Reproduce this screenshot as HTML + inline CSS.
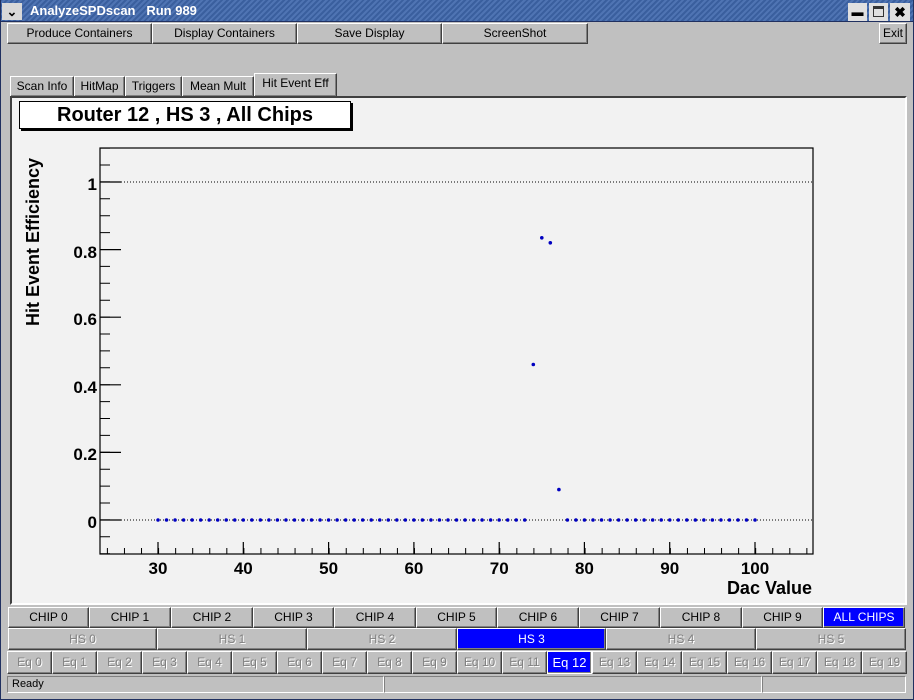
<!DOCTYPE html>
<html><head><style>
*{margin:0;padding:0;box-sizing:border-box}
body{width:914px;height:700px;background:#c0c0c0;font-family:"Liberation Sans",sans-serif;position:relative;overflow:hidden}
.a{position:absolute}
.btn{position:absolute;background:#c0c0c0;border:1px solid;border-color:#fff #404040 #404040 #fff;font-size:12px;text-align:center;color:#000;box-shadow:inset -1px -1px 0 #808080}
.g{color:#808080;text-shadow:1px 1px 0 #fff}
.sel{background:#0000ff;color:#fff;text-shadow:none}
</style></head><body>
<div class="a" style="left:0;top:0;width:914px;height:22px;background:repeating-linear-gradient(135deg,#3a5f9e 0 2px,#4f74b3 2px 4px);border-bottom:1px solid #203060"></div>
<div class="a" style="left:0;top:0;width:914px;height:700px;border:1px solid #203060;border-top:none;pointer-events:none"></div>
<div class="a" style="left:2px;top:3px;width:20px;height:17px;background:#d8d8d8;font-size:13px;text-align:center;line-height:17px;font-weight:bold">⌄</div>
<div class="a" style="left:30px;top:3px;color:#fff;font-weight:bold;font-size:13px">AnalyzeSPDscan&nbsp;&nbsp;&nbsp;Run 989</div>
<div class="a" style="left:848px;top:3px;width:19px;height:18px;background:#e0e0e0;font-size:12px;text-align:center;line-height:18px;font-weight:bold">▬</div>
<div class="a" style="left:869px;top:3px;width:19px;height:18px;background:#e0e0e0;text-align:center;"><div style="margin:3px auto;width:11px;height:11px;border:1px solid #333;border-top-width:3px"></div></div>
<div class="a" style="left:890px;top:3px;width:20px;height:18px;background:#e0e0e0;font-size:14px;text-align:center;line-height:18px;font-weight:bold">✖</div>

<div class="btn" style="left:7px;top:23px;width:145px;height:21px;line-height:19px">Produce Containers</div>
<div class="btn" style="left:152px;top:23px;width:145px;height:21px;line-height:19px">Display Containers</div>
<div class="btn" style="left:297px;top:23px;width:145px;height:21px;line-height:19px">Save Display</div>
<div class="btn" style="left:442px;top:23px;width:146px;height:21px;line-height:19px">ScreenShot</div>
<div class="btn" style="left:879px;top:23px;width:28px;height:21px;line-height:19px">Exit</div>

<div class="btn" style="left:10px;top:76px;width:64px;height:20px;line-height:18px;border-bottom:none">Scan Info</div>
<div class="btn" style="left:74px;top:76px;width:51px;height:20px;line-height:18px;border-bottom:none">HitMap</div>
<div class="btn" style="left:125px;top:76px;width:57px;height:20px;line-height:18px;border-bottom:none">Triggers</div>
<div class="btn" style="left:182px;top:76px;width:72px;height:20px;line-height:18px;border-bottom:none">Mean Mult</div>
<div class="btn" style="left:254px;top:73px;width:83px;height:23px;line-height:19px;border-bottom:none">Hit Event Eff</div>

<div class="a" style="left:10px;top:96px;width:897px;height:509px;background:#f2f2f2;border:2px solid;border-color:#404040 #fff #fff #404040"></div>
<div class="a" style="left:19px;top:101px;width:332px;height:28px;background:#fff;border:1px solid #000;box-shadow:2px 2px 0 #000;font-size:20px;font-weight:bold;text-align:center;line-height:26px">Router 12 , HS 3 , All Chips</div>

<svg class="a" style="left:0;top:0" width="914" height="700" font-family="Liberation Sans" font-weight="bold">
<rect x="100" y="148" width="713" height="406" fill="none" stroke="#000" stroke-width="1.2"/>
<g stroke="#000" stroke-dasharray="1 2" stroke-width="1"><line x1="121" y1="182" x2="813" y2="182"/><line x1="121" y1="520" x2="813" y2="520"/></g>
<line x1="105" y1="147.6" x2="105" y2="555" stroke="#000" stroke-width="10" stroke-dasharray="1 15.9"/>
<g stroke="#000" stroke-width="1.2"><line x1="100" y1="182" x2="121" y2="182"/><line x1="100" y1="249.6" x2="121" y2="249.6"/><line x1="100" y1="317.2" x2="121" y2="317.2"/><line x1="100" y1="384.8" x2="121" y2="384.8"/><line x1="100" y1="452.4" x2="121" y2="452.4"/><line x1="100" y1="520" x2="121" y2="520"/></g>
<line x1="106.9" y1="551" x2="813" y2="551" stroke="#000" stroke-width="6" stroke-dasharray="1 16.06"/>
<g stroke="#000" stroke-width="1.2"><line x1="158" y1="542" x2="158" y2="554"/><line x1="243.3" y1="542" x2="243.3" y2="554"/><line x1="328.6" y1="542" x2="328.6" y2="554"/><line x1="413.9" y1="542" x2="413.9" y2="554"/><line x1="499.2" y1="542" x2="499.2" y2="554"/><line x1="584.4" y1="542" x2="584.4" y2="554"/><line x1="669.7" y1="542" x2="669.7" y2="554"/><line x1="755" y1="542" x2="755" y2="554"/></g>
<g stroke="#0000c0" stroke-width="3.5" stroke-linecap="round" stroke-dasharray="0 8.529"><line x1="158" y1="520" x2="526" y2="520"/><line x1="567.4" y1="520" x2="756" y2="520"/></g>
<g fill="#0000c0"><circle cx="533.3" cy="364.5" r="1.8"/><circle cx="541.8" cy="237.8" r="1.8"/><circle cx="550.3" cy="242.8" r="1.8"/><circle cx="558.9" cy="489.6" r="1.8"/></g>
<g font-size="17" text-anchor="end"><text x="97" y="190">1</text><text x="97" y="258">0.8</text><text x="97" y="325">0.6</text><text x="97" y="393">0.4</text><text x="97" y="460">0.2</text><text x="97" y="528">0</text></g>
<g font-size="17" text-anchor="middle"><text x="158" y="574">30</text><text x="243.3" y="574">40</text><text x="328.6" y="574">50</text><text x="413.9" y="574">60</text><text x="499.2" y="574">70</text><text x="584.4" y="574">80</text><text x="669.7" y="574">90</text><text x="755" y="574">100</text></g>
<text x="812" y="594" font-size="18" text-anchor="end">Dac Value</text>
<text transform="translate(39,326) rotate(-90)" font-size="18">Hit Event Efficiency</text>
</svg>

<div class="btn" style="left:8px;top:607px;width:81px;height:21px;line-height:19px">CHIP 0</div>
<div class="btn" style="left:89px;top:607px;width:82px;height:21px;line-height:19px">CHIP 1</div>
<div class="btn" style="left:171px;top:607px;width:82px;height:21px;line-height:19px">CHIP 2</div>
<div class="btn" style="left:253px;top:607px;width:81px;height:21px;line-height:19px">CHIP 3</div>
<div class="btn" style="left:334px;top:607px;width:82px;height:21px;line-height:19px">CHIP 4</div>
<div class="btn" style="left:416px;top:607px;width:81px;height:21px;line-height:19px">CHIP 5</div>
<div class="btn" style="left:497px;top:607px;width:82px;height:21px;line-height:19px">CHIP 6</div>
<div class="btn" style="left:579px;top:607px;width:81px;height:21px;line-height:19px">CHIP 7</div>
<div class="btn" style="left:660px;top:607px;width:82px;height:21px;line-height:19px">CHIP 8</div>
<div class="btn" style="left:742px;top:607px;width:81px;height:21px;line-height:19px">CHIP 9</div>
<div class="btn sel" style="left:823px;top:607px;width:82px;height:21px;line-height:19px">ALL CHIPS</div>

<div class="btn g" style="left:8px;top:628px;width:149px;height:22px;line-height:20px">HS 0</div>
<div class="btn g" style="left:157px;top:628px;width:150px;height:22px;line-height:20px">HS 1</div>
<div class="btn g" style="left:307px;top:628px;width:150px;height:22px;line-height:20px">HS 2</div>
<div class="btn sel" style="left:457px;top:628px;width:149px;height:22px;line-height:20px">HS 3</div>
<div class="btn g" style="left:606px;top:628px;width:150px;height:22px;line-height:20px">HS 4</div>
<div class="btn g" style="left:756px;top:628px;width:150px;height:22px;line-height:20px">HS 5</div>

<div class="a" style="left:7px;top:651px;width:900px;height:23px;font-size:12px">
<div class="btn g" style="left:0px;top:0;width:45px;height:23px;line-height:21px">Eq 0</div>
<div class="btn g" style="left:45px;top:0;width:45px;height:23px;line-height:21px">Eq 1</div>
<div class="btn g" style="left:90px;top:0;width:45px;height:23px;line-height:21px">Eq 2</div>
<div class="btn g" style="left:135px;top:0;width:45px;height:23px;line-height:21px">Eq 3</div>
<div class="btn g" style="left:180px;top:0;width:45px;height:23px;line-height:21px">Eq 4</div>
<div class="btn g" style="left:225px;top:0;width:45px;height:23px;line-height:21px">Eq 5</div>
<div class="btn g" style="left:270px;top:0;width:45px;height:23px;line-height:21px">Eq 6</div>
<div class="btn g" style="left:315px;top:0;width:45px;height:23px;line-height:21px">Eq 7</div>
<div class="btn g" style="left:360px;top:0;width:45px;height:23px;line-height:21px">Eq 8</div>
<div class="btn g" style="left:405px;top:0;width:45px;height:23px;line-height:21px">Eq 9</div>
<div class="btn g" style="left:450px;top:0;width:45px;height:23px;line-height:21px">Eq 10</div>
<div class="btn g" style="left:495px;top:0;width:45px;height:23px;line-height:21px">Eq 11</div>
<div class="btn sel" style="left:540px;top:0;width:45px;height:23px;line-height:21px;border:1px solid #fff;font-size:13px">Eq 12</div>
<div class="btn g" style="left:585px;top:0;width:45px;height:23px;line-height:21px">Eq 13</div>
<div class="btn g" style="left:630px;top:0;width:45px;height:23px;line-height:21px">Eq 14</div>
<div class="btn g" style="left:675px;top:0;width:45px;height:23px;line-height:21px">Eq 15</div>
<div class="btn g" style="left:720px;top:0;width:45px;height:23px;line-height:21px">Eq 16</div>
<div class="btn g" style="left:765px;top:0;width:45px;height:23px;line-height:21px">Eq 17</div>
<div class="btn g" style="left:810px;top:0;width:45px;height:23px;line-height:21px">Eq 18</div>
<div class="btn g" style="left:855px;top:0;width:45px;height:23px;line-height:21px">Eq 19</div>
</div>

<div class="a" style="left:7px;top:676px;width:377px;height:17px;border:1px solid;border-color:#808080 #fff #fff #808080;font-size:11px;padding-left:4px;line-height:15px">Ready</div>
<div class="a" style="left:384px;top:676px;width:378px;height:17px;border:1px solid;border-color:#808080 #fff #fff #808080"></div>
<div class="a" style="left:762px;top:676px;width:144px;height:17px;border:1px solid;border-color:#808080 #fff #fff #808080"></div>
</body></html>
